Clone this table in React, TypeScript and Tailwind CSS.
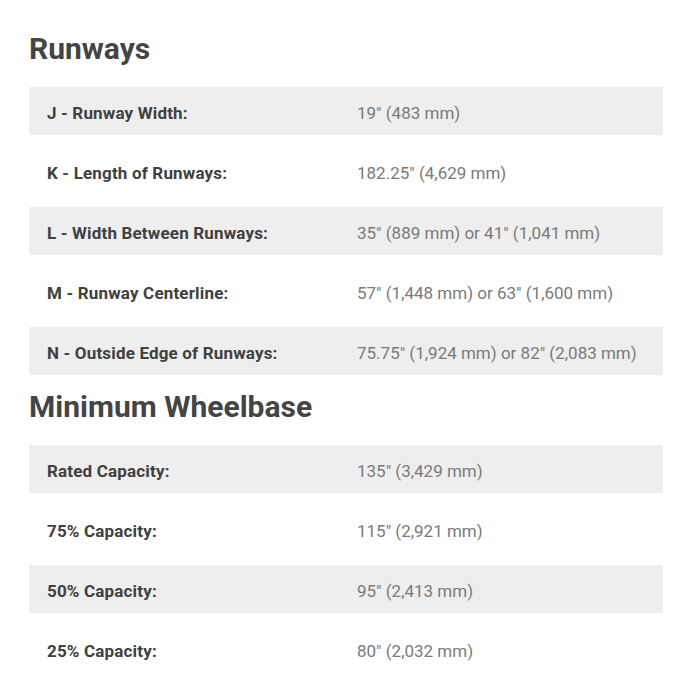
const runways = [
  { label: 'J - Runway Width:', value: '19" (483 mm)' },
  { label: 'K - Length of Runways:', value: '182.25" (4,629 mm)' },
  { label: 'L - Width Between Runways:', value: '35" (889 mm) or 41" (1,041 mm)' },
  { label: 'M - Runway Centerline:', value: '57" (1,448 mm) or 63" (1,600 mm)' },
  { label: 'N - Outside Edge of Runways:', value: '75.75" (1,924 mm) or 82" (2,083 mm)' },
];

const wheelbase = [
  { label: 'Rated Capacity:', value: '135" (3,429 mm)' },
  { label: '75% Capacity:', value: '115" (2,921 mm)' },
  { label: '50% Capacity:', value: '95" (2,413 mm)' },
  { label: '25% Capacity:', value: '80" (2,032 mm)' },
];

interface Spec {
  label: string;
  value: string;
}

const SpecTable = ({ rows }: { rows: Spec[] }) => (
  <div className="flex flex-col">
    {rows.map((row, i) => (
      <div
        key={row.label}
        className={`mb-3 grid h-12 grid-cols-[310px_1fr] items-center px-[18px] pt-[3px] text-[17px] leading-6 ${
          i % 2 === 0 ? 'bg-[#eeeeee]' : 'bg-white'
        }`}
      >
        <span className="font-bold tracking-[0.01em] text-[#404040]">{row.label}</span>
        <span className="text-[#7a7a7a]">{row.value}</span>
      </div>
    ))}
  </div>
);

export default function App() {
  return (
    <div
      className="min-h-[700px] w-[700px] bg-white pt-[31px] pl-[29px] pr-[37px]"
      style={{ fontFamily: 'Roboto, "Open Sans", sans-serif' }}
    >
      <h2 className="mb-5 text-[30px] font-bold leading-9 text-[#444444]">
        Runways
      </h2>
      <SpecTable rows={runways} />
      <h2 className="mt-[2px] mb-5 text-[30px] font-bold leading-9 text-[#444444]">
        Minimum Wheelbase
      </h2>
      <SpecTable rows={wheelbase} />
    </div>
  );
}
